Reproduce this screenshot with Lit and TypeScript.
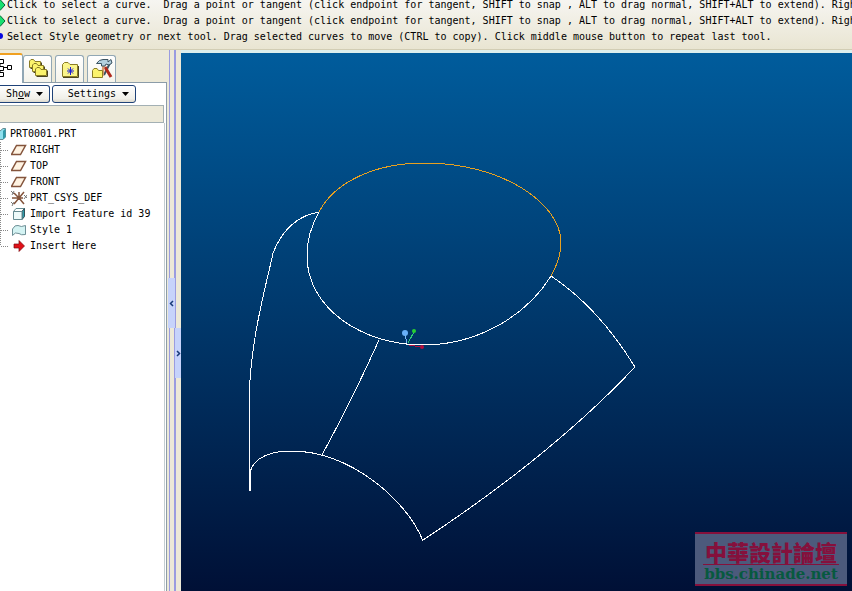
import { LitElement, html, css, svg } from "lit";
import { customElement, state } from "lit/decorators.js";

const PROMPT =
  "Click to select a curve.  Drag a point or tangent (click endpoint for tangent, SHIFT to snap , ALT to drag normal, SHIFT+ALT to extend). Right mouse button for more options.";
const HINT =
  "Select Style geometry or next tool. Drag selected curves to move (CTRL to copy). Click middle mouse button to repeat last tool.";

const plane = svg`<path d="M5.5 3.5H14.5L9.5 12.5H.5Z" fill="#fff3e2" stroke="#84543c" stroke-width="1.5"/>`;
const csys = svg`
  <path d="M0 1l3 3M3 1L1 5M13 5l3 3M16 5l-3 4M0 12l2 2M3 12l-2 4" stroke="#777" fill="none"/>
  <path d="M8 8V2M8 8L3 3M8 8L13 2M1 8H12M8 8L3 14M8 8L13 14" stroke="#84543c" stroke-width="1.5" fill="none"/>`;
const cube = svg`
  <path d="M2.500 5.500L5 2.500H13.500L11 5.500Z" fill="#fff" stroke="#668b92"/>
  <path d="M11 5.500L13.500 2.500V10.500L11 13.500Z" fill="#2f9aaa" stroke="#31525a"/>
  <path d="M2.500 5.500H11V13.500H2.500Z" fill="#eefafa" stroke="#668b92"/>`;
const surface = svg`<path d="M1.500 13.500V7Q4 2.500 7 3.500Q10 5.500 14.500 3.500V12.500Q10 13.500 8 11.500Q4 9.500 1.500 13.500Z" fill="#d4f3f3" stroke="#6d8f96"/>`;
const arrow = svg`<path d="M3 6H8V2.500L13.500 8L8 13.500V10H3Z" fill="#e01018" stroke="#7a0a10" stroke-width=".7"/>`;

const NODES = [
  { label: "RIGHT", icon: plane },
  { label: "TOP", icon: plane },
  { label: "FRONT", icon: plane },
  { label: "PRT_CSYS_DEF", icon: csys },
  { label: "Import Feature id 39", icon: cube },
  { label: "Style 1", icon: surface },
  { label: "Insert Here", icon: arrow },
];

const folder = (x: number, y: number) => svg`
  <path d="M${x} ${y + 8}V${y + 1.5}L${x + 1.5} ${y}H${x + 4}L${x + 5.5} ${y + 2}H${x + 11}V${y + 8}Z"
    fill="#fbf36c" stroke="#8a7c24"/>
  <path d="M${x + 1} ${y + 9}H${x + 12}V${y + 3}" fill="none" stroke="#4a4420"/>`;

const TABS = [
  {
    label: "Model Tree",
    icon: svg`<path d="M0 4V16M0 9.500H7" stroke="#000" fill="none"/>
      <path d="M-.5 1.500h4v4h-4zM-.5 8.500h4v4h-4zM-.5 14.500h4v4h-4zM7.500 7.500h4v4h-4z" fill="#fff" stroke="#000"/>`,
  },
  {
    label: "Layer Tree",
    icon: svg`${folder(2.5, 1.5)}${folder(5.5, 5.5)}${folder(8.5, 9.5)}`,
  },
  {
    label: "Favorites",
    icon: svg`<path d="M3.500 18.500V6.500L5.500 4.500H9L11 6.500H18.500V18.500Z" fill="#fbf58a" stroke="#8a7c24"/>
      <path d="M4 19.500H19.500V8" fill="none" stroke="#4a4420"/>
      <path d="M11.500 9V17M8 13H15M9 10.500L14 15.500M14 10.500L9 15.500" stroke="#1a1ad8"/>`,
  },
  {
    label: "Folder Tools",
    icon: svg`
      <path d="M19 5L13 17" stroke="#3c5462" stroke-width="2"/>
      <path d="M14 9L20 19" stroke="#b02a1c" stroke-width="3"/>
      <path d="M12.500 7L11.500 18" stroke="#d89a70" stroke-width="2.500"/>
      <path d="M5.500 5.500Q8 1.500 12 1.500H17V4L20 1.500L21 5L18 7L15 6L14 8H10.500V5.500Z" fill="#b3d0de" stroke="#3c5462"/>
      <path d="M1.500 19.500V12.500L3 10.500H6L7.500 12.500H11.500V19.500Z" fill="#fbf36c" stroke="#8a7c24"/>`,
  },
];

@customElement("app-root")
export class AppRoot extends LitElement {
  @state() private tab = 0;

  static styles = css`
    :host {
      display: flex;
      flex-direction: column;
      min-height: 100vh;
      overflow: hidden;
      background: #ece9d8;
      color: #000;
      font: 10px/16px "DejaVu Sans Mono", "Liberation Mono", monospace;
    }
    .messages {
      display: flex;
      flex-direction: column;
      justify-content: flex-end;
      box-sizing: border-box;
      height: 50px;
      padding-bottom: 4px;
      overflow: hidden;
      background: linear-gradient(#f6f5f1, #e9e5d2);
      border-bottom: 1px solid #d2cdb4;
    }
    .message {
      display: flex;
      flex: none;
      align-items: center;
      gap: 1px;
      white-space: pre;
    }
    .mark {
      flex: none;
      width: 6px;
      height: 16px;
    }
    .work {
      display: flex;
      flex: 1;
    }
    .side {
      display: flex;
      flex-direction: column;
      flex: none;
      width: 167px;
      padding-top: 2px;
    }
    .tabs {
      display: flex;
      align-items: flex-end;
      gap: 3px;
      height: 30px;
    }
    button {
      font: inherit;
      color: inherit;
      padding: 0;
    }
    .tab {
      display: flex;
      align-items: center;
      justify-content: center;
      box-sizing: border-box;
      width: 29px;
      height: 27px;
      background: linear-gradient(#fff, #f4f3ea);
      border: 1px solid #91a7b4;
      border-bottom: 0;
      border-radius: 3px 3px 0 0;
    }
    .tab:first-child {
      width: 23px;
      margin-right: -3px;
      border-left: 0;
      justify-content: flex-start;
      border-top-left-radius: 0;
    }
    .tab.active {
      position: relative;
      height: 30px;
      margin-bottom: -1px;
      background: #fff;
      border-top: 2px solid #f0a020;
    }
    .panel {
      display: flex;
      flex-direction: column;
      flex: 1;
      background: #fff;
      border: solid #8b9ca8;
      border-width: 1px 1px 0 0;
    }
    .tools {
      display: flex;
      gap: 2px;
      padding: 2px 0;
    }
    .menu {
      display: flex;
      align-items: center;
      justify-content: flex-end;
      gap: 6px;
      box-sizing: border-box;
      height: 18px;
      padding-right: 6px;
      border: 1px solid #1f4278;
      border-radius: 3px;
      background: linear-gradient(#fff, #f0efe8 80%, #dcd8cc);
    }
    .show {
      width: 50px;
      border-left: 0;
      border-radius: 0 3px 3px 0;
    }
    .settings {
      width: 84px;
    }
    .caret {
      width: 7px;
      height: 4px;
    }
    .heading {
      box-sizing: border-box;
      height: 18px;
      margin-right: 2px;
      background: #ece9d8;
      border: solid #a3b0b4;
      border-width: 1px 1px 1px 0;
    }
    .tree {
      flex: 1;
      margin: 0 1px 0 0;
      padding: 3px 0 0;
      list-style: none;
      border-right: 1px solid #c4cdd0;
    }
    .tree ul {
      margin: 0;
      padding: 0;
      list-style: none;
    }
    .node {
      display: flex;
      align-items: center;
      gap: 3px;
      height: 16px;
      white-space: pre;
    }
    .root svg {
      width: 7px;
      height: 16px;
    }
    .branch {
      width: 8px;
      height: 16px;
    }
    .icon {
      width: 16px;
      height: 16px;
    }
    .splitter {
      display: flex;
      flex: none;
      width: 14px;
    }
    .rail {
      box-sizing: border-box;
      width: 8px;
      padding: 228px 0 0 1px;
      background: linear-gradient(90deg, #ece9d8 2px, #9a9ce0 2px, #9a9ce0 3px, #ece9d8 3px, #ece9d8 7px, #9a9ce0 7px);
    }
    .rail + .rail {
      width: 6px;
      padding: 278px 0 0;
      background: linear-gradient(90deg, #9a9ce0 1px, #ece9d8 1px);
    }
    .grip {
      display: flex;
      align-items: center;
      justify-content: center;
      width: 100%;
      height: 50px;
      border: 0;
      background: #c6d3fb;
    }
    .view {
      position: relative;
      flex: 1;
      min-width: 0;
      border-top: 3px solid #dcefee;
      background: linear-gradient(#005c9c, #00376a 50%, #001036);
    }
    .scene {
      position: absolute;
      left: 0;
      top: 0;
      width: 671px;
      height: 538px;
    }
    .brand {
      position: absolute;
      right: 5px;
      bottom: 5px;
      display: flex;
      flex-direction: column;
      align-items: center;
      box-sizing: border-box;
      width: 152px;
      height: 54px;
      padding-top: 3px;
      border: solid #85103c;
      border-width: 2px 0;
      background: #4c5a7c;
      text-decoration: none;
    }
    .forum {
      width: 136px;
      height: 27px;
      border-bottom: 1px solid #85103c;
      color: #85103c;
      font: 900 22px/28px "Noto Sans CJK TC", sans-serif;
      text-align: center;
      white-space: nowrap;
    }
    .site {
      color: #07593f;
      font: bold 15px/18px "DejaVu Serif", serif;
    }
  `;

  private message(text: string, hint = false) {
    return html`<div class="message">
      <svg class="mark" viewBox="0 0 6 16" aria-hidden="true">
        ${hint
          ? svg`<circle cx="0" cy="7" r="3" fill="#0808e0"/>`
          : svg`<path d="M0 2.500L5 8L0 13.500" fill="#18e070" stroke="#063"/>`}
      </svg>
      <span>${text}</span>
    </div>`;
  }

  private caret() {
    return html`<svg class="caret" viewBox="0 0 7 4" aria-hidden="true"><path d="M0 0H7L3.500 4Z" /></svg>`;
  }

  private grip(label: string, d: string) {
    return html`<button class="grip" aria-label=${label}>
      <svg width="5" height="7" viewBox="0 0 5 7"><path d=${d} fill="none" stroke="#183a78" stroke-width="1.500" /></svg>
    </button>`;
  }

  render() {
    return html`
      <header class="messages">
        ${this.message(PROMPT)}${this.message(PROMPT)}${this.message(HINT, true)}
      </header>
      <main class="work">
        <aside class="side">
          <div class="tabs" role="tablist">
            ${TABS.map(
              (t, i) => html`<button
                class="tab ${i === this.tab ? "active" : ""}"
                role="tab"
                aria-label=${t.label}
                aria-selected=${i === this.tab}
                @click=${() => (this.tab = i)}
              >
                <svg width="22" height="22" viewBox="0 0 22 22">${t.icon}</svg>
              </button>`
            )}
          </div>
          <div class="panel">
            <div class="tools">
              <button class="menu show"><span>Sh<u>o</u>w</span>${this.caret()}</button>
              <button class="menu settings"><span>Settings</span>${this.caret()}</button>
            </div>
            <div class="heading"></div>
            <ul class="tree">
              <li>
                <div class="node root">
                  <svg viewBox="0 0 7 16" aria-hidden="true">
                    <path d="M0 5L3 2.500H5.500V11L3 13.500H0" fill="#8ee0ee" stroke="#668b92" />
                    <path d="M3 5L5.500 2.500V11L3 13.500Z" fill="#2f9aaa" />
                  </svg>
                  <span>PRT0001.PRT</span>
                </div>
                <ul>
                  ${NODES.map(
                    (n, i) => html`<li class="node">
                      <svg class="branch" viewBox="0 0 8 16" aria-hidden="true">
                        <path
                          d="M.5 0V${i === NODES.length - 1 ? 8 : 16}M1 8.500H8"
                          fill="none"
                          stroke="#888"
                          stroke-dasharray="1 1"
                        />
                      </svg>
                      <svg class="icon" viewBox="0 0 16 16" aria-hidden="true">${n.icon}</svg>
                      <span>${n.label}</span>
                    </li>`
                  )}
                </ul>
              </li>
            </ul>
          </div>
        </aside>
        <div class="splitter">
          <div class="rail">${this.grip("Collapse panel", "M4 1L1.500 3.500L4 6")}</div>
          <div class="rail">${this.grip("Expand panel", "M1 1L3.500 3.500L1 6")}</div>
        </div>
        <section class="view" aria-label="Model view">
          <svg class="scene" viewBox="181 53 671 538" fill="none" shape-rendering="crispEdges">
            <g stroke="#fff">
              <path d="M319 212C311 226 307 240 307 256C307 308 362 345 423 345C475 345 525 318 551 276" />
              <path d="M319 212C295 216 281 233 273 253C269 275 249 340 249 405V472Q249 480 250 491V473C253 457 272 451 291 451C350 451 407 500 423 541" />
              <path d="M379 340Q353 398 322 455" />
              <path d="M551 276Q598 307 635 367Q551 456 423 540" />
            </g>
            <path d="M319 212C333 185 370 163 425 163C500 163 561 202 561 243C561 254 557 265 551 276" stroke="#e8a020" />
            <path d="M405 334L407 343" stroke="#78b8f8" />
            <path d="M414 332L408 343" stroke="#30c878" />
            <path d="M409 345L421 347" stroke="#b01040" />
            <g shape-rendering="auto">
              <circle cx="405" cy="333" r="3" fill="#68b0f8" />
              <circle cx="414" cy="331" r="2" fill="#28d030" />
              <circle cx="422" cy="347" r="2" fill="#b80c3c" />
            </g>
          </svg>
          <a class="brand" href="#">
            <span class="forum">中華設計論壇</span>
            <span class="site">bbs.chinade.net</span>
          </a>
        </section>
      </main>
    `;
  }
}
